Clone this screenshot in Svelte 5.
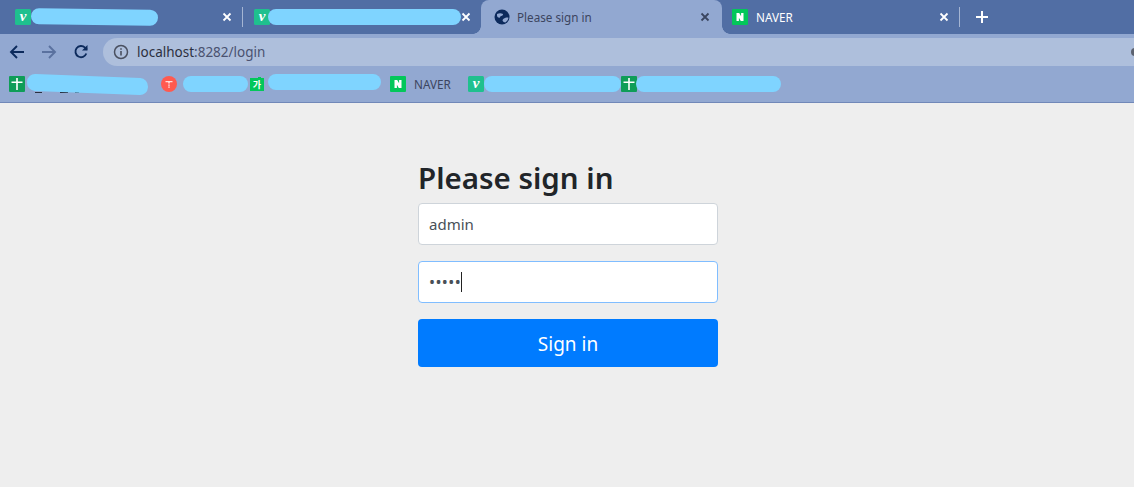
{#snippet vicon()}
  <svg class="fav" viewBox="0 0 16 16">
    <rect width="16" height="16" rx="1.500" fill="#1fc08e" />
    <text x="8" y="11.500" text-anchor="middle" class="v-letter">v</text>
  </svg>
{/snippet}

{#snippet nicon()}
  <svg class="fav" viewBox="0 0 16 16">
    <rect width="16" height="16" rx="1" fill="#03c75a" />
    <path d="M4.500 4h2.700l1.900 3.200V4h2.400v8H8.800L6.900 8.800V12H4.500z" fill="#fff" />
  </svg>
{/snippet}

{#snippet crossicon()}
  <svg class="fav" viewBox="0 0 16 16">
    <rect width="16" height="16" rx="1" fill="#0f9d58" />
    <path d="M2.500 5.500h11V7h-4.700v7H7.200V7H2.500zM7.200 2h1.600v4H7.200z" fill="#fff" />
  </svg>
{/snippet}

{#snippet closeicon(tone)}
  <svg class="close {tone}" viewBox="0 0 10 10"><path d="M1.500 1.500l7 7M8.500 1.500l-7 7" /></svg>
{/snippet}

<div class="browser">
  <div class="tabstrip">
    <div class="tab tab-1">
      {@render vicon()}
      <span class="blur tab-blur-1"></span>
      {@render closeicon("light")}
    </div>
    <i class="divider"></i>
    <div class="tab tab-2">
      {@render vicon()}
      <span class="blur tab-blur-2"></span>
      {@render closeicon("light")}
    </div>
    <div class="tab active">
      <svg class="globe" viewBox="0 0 16 16">
        <circle cx="8" cy="8" r="7.500" fill="#0c2a5c" />
        <path d="M3 5c2-1 4-1 5.500-.2 1 .6.600 1.600-.5 2-1.300.4-2.200 1-2.500 2.200L3.500 8C3 7 2.800 6 3 5zM8.500 11.500c.3-1.300 1.500-2.300 3-2.700 1-.3 2-.3 3-.1-.4 2-1.500 3.800-3.200 4.700-1.200 0-2.300-.7-2.800-1.900z" fill="#92a8d1" />
      </svg>
      <span class="title">Please sign in</span>
      {@render closeicon("dark")}
    </div>
    <div class="tab tab-4">
      {@render nicon()}
      <span class="title on-dark">NAVER</span>
      {@render closeicon("light")}
    </div>
    <i class="divider"></i>
    <svg class="newtab" viewBox="0 0 12 12"><path d="M6 0v12M0 6h12" /></svg>
  </div>

  <div class="toolbar">
    <svg class="nav" viewBox="0 0 16 16"><path d="M15 8H2M8 2L2 8l6 6" stroke="#0c2a5c" /></svg>
    <svg class="nav" viewBox="0 0 16 16"><path d="M15 8H2M8 2L2 8l6 6" stroke="#5a719f" transform="rotate(180 8 8)" /></svg>
    <svg class="nav" viewBox="0 0 16 16">
      <path d="M13.300 9.500A5.600 5.600 0 1 1 12 3.600L14 5.600" stroke="#0c2a5c" />
      <path d="M14.500 1v5.500H9z" fill="#0c2a5c" stroke="none" />
    </svg>
    <div class="omnibox">
      <svg class="info" viewBox="0 0 16 16">
        <circle cx="8" cy="8" r="6.500" fill="none" stroke="#4a5060" stroke-width="1.500" />
        <path d="M7.200 7h1.600v4.500H7.200zM7.200 4.200h1.600v1.600H7.200z" fill="#4a5060" />
      </svg>
      <span class="url">localhost<span class="path">:8282/login</span></span>
      <i class="edge-dot"></i>
    </div>
  </div>

  <div class="bookmarks">
    <div class="mark mark-1">
      {@render crossicon()}
      <svg class="peek" viewBox="0 0 56 4"><path d="M0 2.500h7M25 2.500h8M40 2.500h4M53 2.500h1" /></svg>
      <span class="blur book-blur-1"></span>
    </div>
    <div class="mark mark-2">
      <svg class="fav" viewBox="0 0 16 16">
        <circle cx="8" cy="8" r="8" fill="#ff5a4f" />
        <path d="M4.500 5h7v1.200H8.800V7.500H7.200V6.200H4.500zM7.200 8.500h1.600v1.200H7.200zM7.200 10.500h1.600v1.200H7.200z" fill="#fff" opacity=".8" />
      </svg>
      <span class="blur book-blur-2"></span>
    </div>
    <div class="mark mark-3">
      <svg class="fav small" viewBox="0 0 14 14">
        <path d="M0 1h8V0h3v1h3v13H0z" fill="#03c75a" />
        <text x="7" y="10.500" text-anchor="middle" class="ga-letter">가</text>
      </svg>
      <span class="blur book-blur-3"></span>
    </div>
    <div class="mark mark-4">
      {@render nicon()}
      <span class="title">NAVER</span>
    </div>
    <div class="mark mark-5">
      {@render vicon()}
      <span class="blur book-blur-4"></span>
    </div>
    <div class="mark">
      {@render crossicon()}
      <span class="blur book-blur-5"></span>
    </div>
  </div>
</div>

<main class="page">
  <form class="signin">
    <h2>Please sign in</h2>
    <div class="field">admin</div>
    <div class="field focus">
      <span class="dots">•••••</span><i class="caret"></i>
    </div>
    <button type="button">Sign in</button>
  </form>
</main>

<style>
  :global(body) {
    margin: 0;
    background: #eee;
    font-family: "Noto Sans", "Open Sans", sans-serif;
    overflow: hidden;
  }
  .browser {
    height: 102px;
    background: #92a8d1;
    border-bottom: 1px solid #7188b8;
  }
  .tabstrip {
    height: 34px;
    background: #516ea4;
    display: flex;
    align-items: flex-start;
  }
  .tab {
    height: 34px;
    display: flex;
    align-items: center;
    box-sizing: border-box;
    flex: none;
  }
  .tab .close {
    margin-left: auto;
  }
  .tab-1 {
    width: 242px;
    padding: 0 10px 0 15px;
  }
  .tab-2 {
    width: 238px;
    padding: 0 13px 0 11px;
  }
  .tab-4 {
    width: 237px;
    padding: 0 10px;
  }
  .tab.active {
    width: 241px;
    height: 38px;
    background: #92a8d1;
    border-radius: 8px 8px 0 0;
    padding: 0 12px 4px 13px;
    position: relative;
  }
  .tab.active::before,
  .tab.active::after {
    content: "";
    position: absolute;
    bottom: 4px;
    width: 8px;
    height: 8px;
  }
  .tab.active::before {
    left: -8px;
    background: radial-gradient(circle at 0 0, transparent 7.500px, #92a8d1 8px);
  }
  .tab.active::after {
    right: -8px;
    background: radial-gradient(circle at 100% 0, transparent 7.500px, #92a8d1 8px);
  }
  .divider {
    width: 1px;
    height: 20px;
    margin-top: 7px;
    background: #a5b5d3;
    flex: none;
  }
  .fav {
    width: 16px;
    height: 16px;
    flex: none;
  }
  .fav.small {
    width: 14px;
    height: 14px;
  }
  .v-letter {
    font-family: "Liberation Serif", serif;
    font-style: italic;
    font-weight: bold;
    font-size: 15px;
    fill: #fff;
  }
  .ga-letter {
    font-family: "Noto Sans CJK KR", sans-serif;
    font-size: 9px;
    font-weight: 700;
    fill: #fff;
  }
  .globe {
    width: 16px;
    height: 16px;
    flex: none;
    margin-right: 7px;
  }
  .close {
    width: 10px;
    height: 10px;
    flex: none;
    fill: none;
    stroke-width: 1.800;
  }
  .close.light {
    stroke: #fff;
  }
  .close.dark {
    stroke: #3a4660;
  }
  .title {
    color: #3c4560;
    font-size: 11.700px;
  }
  .on-dark {
    color: #fff;
    margin-left: 8px;
  }
  .newtab {
    width: 12px;
    height: 12px;
    margin: 11px 0 0 16px;
    fill: none;
    stroke: #fff;
    stroke-width: 2;
  }
  .blur {
    display: block;
    background: #7fd4ff;
    height: 16px;
    border-radius: 8px;
    flex: none;
    position: relative;
  }
  .tab-blur-1 {
    width: 127px;
    transform: rotate(0.700deg);
  }
  .tab-blur-2 {
    width: 193px;
    margin-left: -2px;
  }
  .toolbar {
    height: 32px;
    display: flex;
    align-items: flex-end;
    padding-left: 9px;
  }
  .nav {
    width: 16px;
    height: 16px;
    flex: none;
    fill: none;
    stroke-width: 1.900;
    margin: 0 16px 6px 0;
  }
  .omnibox {
    flex: 1;
    height: 28px;
    margin-left: -2px;
    background: #aebfdc;
    border-radius: 14px 0 0 14px;
    display: flex;
    align-items: center;
    padding-left: 10px;
  }
  .info {
    width: 16px;
    height: 16px;
    margin-right: 8px;
  }
  .url {
    font-size: 13.500px;
    color: #2c3040;
  }
  .path {
    color: #4a5270;
  }
  .edge-dot {
    width: 8px;
    height: 8px;
    border-radius: 50%;
    background: #5c6270;
    margin: 0 -5px 0 auto;
  }
  .bookmarks {
    height: 36px;
    display: flex;
    align-items: center;
    padding-left: 9px;
  }
  .mark {
    display: flex;
    align-items: center;
    flex: none;
  }
  .mark-1 {
    width: 152px;
    position: relative;
  }
  .mark-2 {
    width: 89px;
  }
  .mark-3 {
    width: 140px;
  }
  .mark-4 {
    width: 78px;
  }
  .mark-5 {
    width: 153px;
  }
  .mark .title {
    margin-left: 8px;
  }
  .peek {
    position: absolute;
    left: 26px;
    top: 14px;
    width: 56px;
    height: 4px;
    fill: none;
    stroke: #2a3040;
    stroke-width: 1.200;
  }
  .book-blur-1 {
    width: 121px;
    height: 17px;
    margin-left: 2px;
    transform: rotate(2.300deg);
  }
  .book-blur-2 {
    width: 65px;
    margin-left: 6px;
  }
  .book-blur-3 {
    width: 113px;
    margin: -4px 0 0 4px;
  }
  .book-blur-4 {
    width: 137px;
  }
  .book-blur-5 {
    width: 145px;
    margin-left: -1px;
  }
  .page {
    display: flex;
    justify-content: center;
    padding-top: 55px;
  }
  .signin {
    width: 300px;
    margin-left: 2px;
    display: flex;
    flex-direction: column;
  }
  h2 {
    margin: 0 0 6px;
    font-size: 29.500px;
    line-height: 39px;
    font-weight: 600;
    color: #212529;
  }
  .field {
    height: 42px;
    box-sizing: border-box;
    background: #fff;
    border: 1px solid #ced4da;
    border-radius: 4px;
    margin-bottom: 16px;
    padding: 0 10px;
    display: flex;
    align-items: center;
    font-size: 15px;
    color: #495057;
  }
  .field.focus {
    border-color: #80bdff;
  }
  .dots {
    font-size: 16px;
    letter-spacing: 0.400px;
  }
  .caret {
    width: 1px;
    height: 20px;
    background: #222;
  }
  button {
    height: 48px;
    padding: 1px 0 0;
    background: #007bff;
    color: #fff;
    border: none;
    border-radius: 4px;
    font: inherit;
    font-size: 19px;
  }
</style>
